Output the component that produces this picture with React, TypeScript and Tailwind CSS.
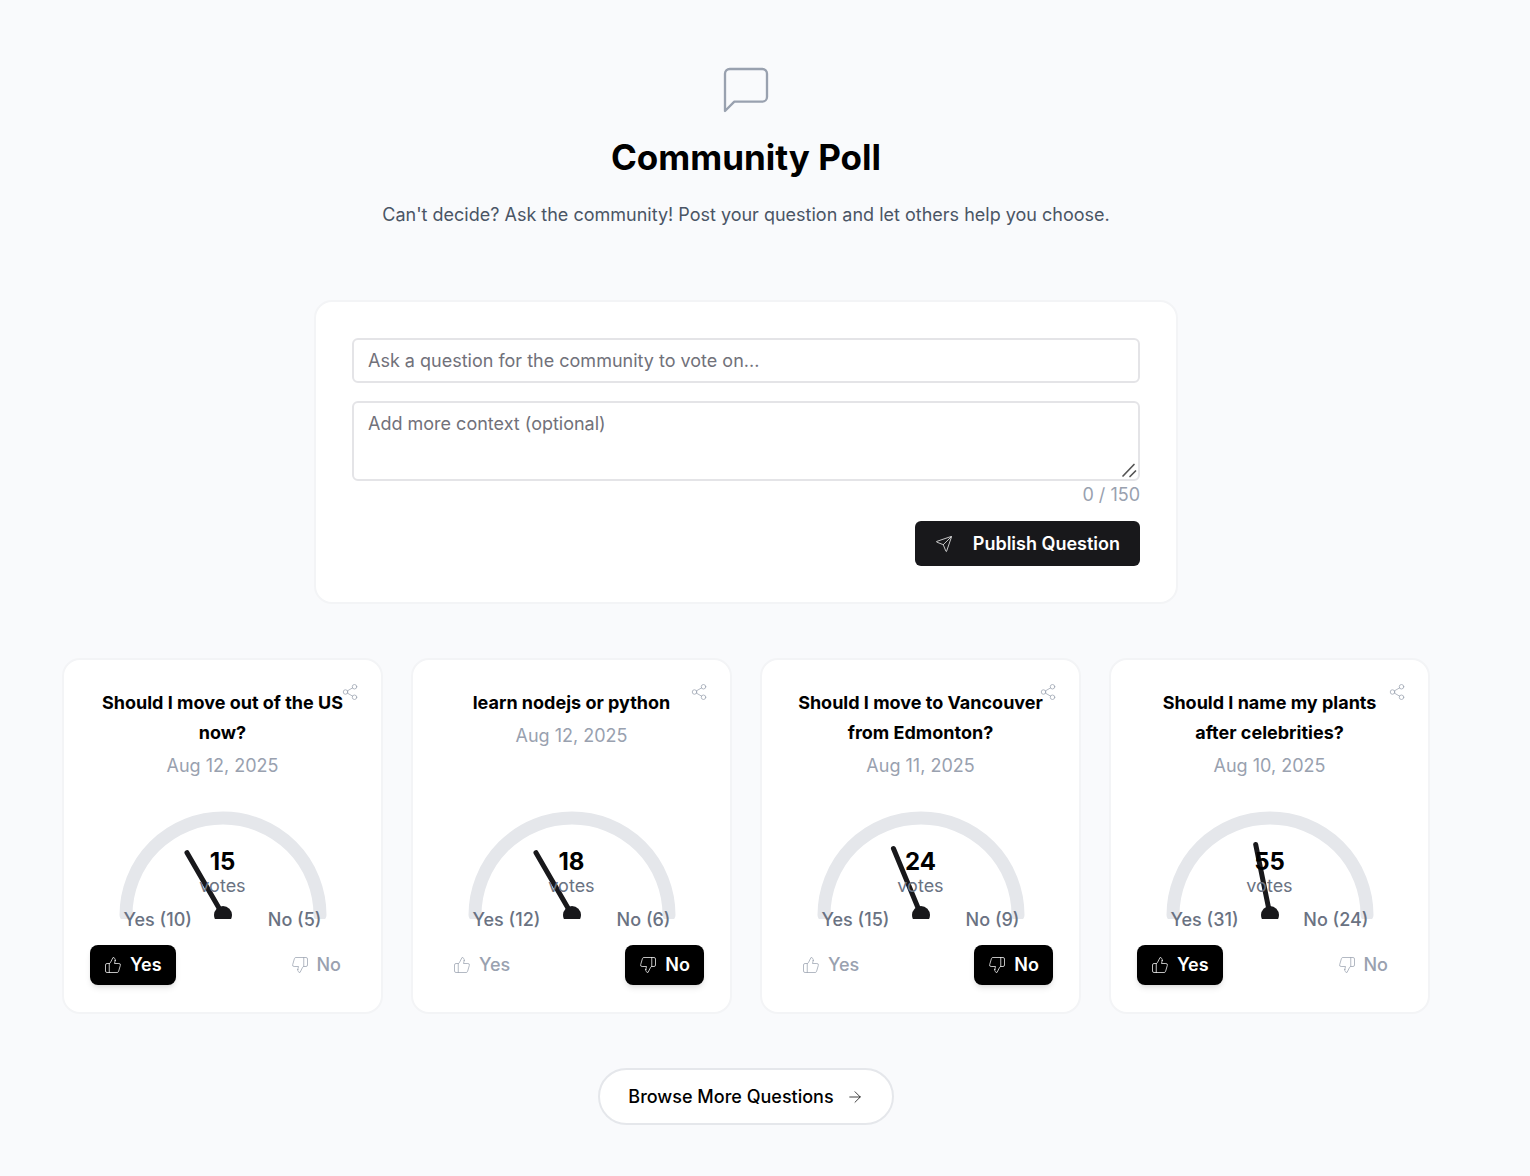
import { useState } from "react";
import { ArrowRight, Send, Share2, ThumbsDown, ThumbsUp } from "lucide-react";

type Vote = "yes" | "no";

type Poll = {
  question: string;
  date: string;
  yes: number;
  no: number;
  vote: Vote;
};

const polls: Poll[] = [
  { question: "Should I move out of the US now?", date: "Aug 12, 2025", yes: 10, no: 5, vote: "yes" },
  { question: "learn nodejs or python", date: "Aug 12, 2025", yes: 12, no: 6, vote: "no" },
  { question: "Should I move to Vancouver from Edmonton?", date: "Aug 11, 2025", yes: 15, no: 9, vote: "no" },
  { question: "Should I name my plants after celebrities?", date: "Aug 10, 2025", yes: 31, no: 24, vote: "yes" },
];

function MessageIcon() {
  return (
    <svg
      width="56"
      height="56"
      viewBox="0 0 24 24"
      fill="none"
      stroke="currentColor"
      strokeWidth="1"
      strokeLinecap="round"
      strokeLinejoin="round"
      className="text-gray-400"
      aria-hidden="true"
    >
      <path d="M21 15a2 2 0 0 1-2 2H7l-4 4V5a2 2 0 0 1 2-2h14a2 2 0 0 1 2 2z" />
    </svg>
  );
}

function Gauge({ yes, no }: { yes: number; no: number }) {
  const total = yes + no;
  const angle = 90 - (yes / total) * 180;
  return (
    <div className="relative w-[208px]">
      <svg viewBox="0 0 208 108" className="block w-full" aria-hidden="true">
        <path d="M7 104A97 97 0 0 1 201 104" fill="none" stroke="#e5e7eb" strokeWidth="13" strokeLinecap="round" />
        <line
          x1="104"
          y1="104"
          x2="104"
          y2="32"
          stroke="#18181b"
          strokeWidth="5"
          strokeLinecap="round"
          transform={`rotate(${angle} 104 104)`}
        />
        <circle cx="104" cy="104" r="9" fill="#18181b" />
      </svg>
      <div className="absolute inset-x-0 top-[37px] flex flex-col items-center">
        <span className="text-2xl leading-7 font-bold text-black">{total}</span>
        <span className="text-lg leading-5 text-gray-500">votes</span>
      </div>
    </div>
  );
}

function VoteButton({ kind, active, onClick }: { kind: Vote; active: boolean; onClick: () => void }) {
  const Icon = kind === "yes" ? ThumbsUp : ThumbsDown;
  return (
    <button
      type="button"
      onClick={onClick}
      aria-pressed={active}
      className={
        active
          ? "flex h-10 items-center gap-2 rounded-lg bg-black px-3.5 text-lg font-semibold text-white shadow-md"
          : "flex h-10 items-center gap-2 rounded-lg px-3.5 text-lg font-medium text-gray-400"
      }
    >
      <Icon size={18} strokeWidth={1} />
      {kind === "yes" ? "Yes" : "No"}
    </button>
  );
}

function PollCard({ poll }: { poll: Poll }) {
  const [vote, setVote] = useState<Vote>(poll.vote);
  return (
    <article className="relative flex flex-col items-center rounded-[18px] border-2 border-gray-100 bg-white px-[26px] pt-7 pb-[27px]">
      <button type="button" aria-label="Share question" className="absolute top-[23px] right-[22px] text-gray-400">
        <Share2 size={18} strokeWidth={1} />
      </button>
      <div className="relative flex min-h-[123px] flex-col gap-1 text-center">
        <h2 className="px-2.5 text-lg leading-[30px] font-bold text-black">{poll.question}</h2>
        <p className="text-lg leading-7 text-gray-400">{poll.date}</p>
      </div>
      <Gauge yes={poll.yes} no={poll.no} />
      <div className="relative -mt-[13px] flex w-[198px] justify-between text-lg leading-7 font-medium text-gray-500">
        <span>Yes ({poll.yes})</span>
        <span>No ({poll.no})</span>
      </div>
      <div className="mt-[11px] flex w-full justify-between">
        <VoteButton kind="yes" active={vote === "yes"} onClick={() => setVote("yes")} />
        <VoteButton kind="no" active={vote === "no"} onClick={() => setVote("no")} />
      </div>
    </article>
  );
}

function QuestionForm() {
  const [context, setContext] = useState("");
  return (
    <form
      onSubmit={(e) => e.preventDefault()}
      className="mx-auto mt-[70px] flex w-full max-w-[864px] flex-col rounded-[18px] border-2 border-gray-100 bg-white p-9"
    >
      <input
        type="text"
        aria-label="Question"
        placeholder="Ask a question for the community to vote on..."
        className="h-[45px] w-full rounded-md border-2 border-[#e4e4e7] bg-white px-3.5 text-lg placeholder:text-[#71717a]"
      />
      <div className="relative mt-[18px]">
        <textarea
          aria-label="Context"
          maxLength={150}
          value={context}
          onChange={(e) => setContext(e.target.value)}
          placeholder="Add more context (optional)"
          className="block h-20 w-full resize-none rounded-md border-2 border-[#e4e4e7] bg-white px-3.5 py-[7px] text-lg placeholder:text-[#71717a]"
        />
        <svg width="16" height="16" viewBox="0 0 16 16" className="pointer-events-none absolute right-[3px] bottom-[3px]" aria-hidden="true">
          <path d="M2 14 13 2.500M9 14.500 14.500 9" stroke="#555" strokeWidth="1.700" strokeLinecap="round" fill="none" />
        </svg>
      </div>
      <p className="self-end text-lg leading-7 text-gray-400">{context.length} / 150</p>
      <button
        type="submit"
        className="mt-3 flex h-[45px] items-center gap-5 self-end rounded-md bg-[#18181b] px-5 text-lg font-semibold text-white"
      >
        <Send size={18} strokeWidth={1} />
        Publish Question
      </button>
    </form>
  );
}

export default function App() {
  return (
    <div className="min-h-screen bg-[#f9fafc] pr-[38px] font-['Inter',sans-serif]">
      <main className="flex flex-col px-[62px] pt-[62px] pb-[51px]">
        <header className="flex flex-col items-center text-center">
          <MessageIcon />
          <h1 className="mt-4 text-[35px] leading-[46px] font-bold text-black">Community Poll</h1>
          <p className="mt-5 text-lg leading-[30px] text-gray-600">
            Can't decide? Ask the community! Post your question and let others help you choose.
          </p>
        </header>
        <QuestionForm />
        <section className="mt-[54px] grid grid-cols-4 gap-7">
          {polls.map((poll) => (
            <PollCard key={poll.question} poll={poll} />
          ))}
        </section>
        <a
          href="#questions"
          className="mt-[54px] flex h-[57px] items-center gap-3 self-center rounded-full border-2 border-gray-200 bg-white px-7 text-lg font-medium text-black"
        >
          Browse More Questions
          <ArrowRight size={18} strokeWidth={1} />
        </a>
      </main>
    </div>
  );
}
